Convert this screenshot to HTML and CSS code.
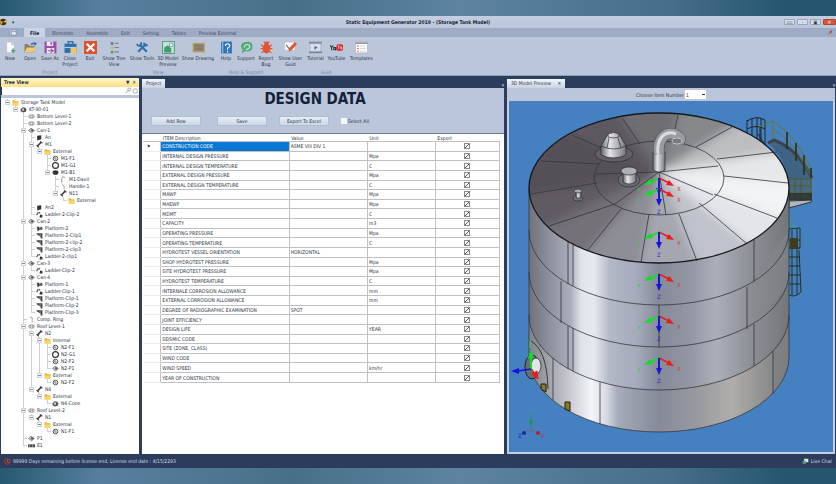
FILE: index.html
```
<!DOCTYPE html>
<html lang="en">
<head>
    <meta charset="UTF-8">
    <meta name="viewport" content="width=device-width, initial-scale=1.0">
    <title>Static Equipment Generator 2019 - (Storage Tank Model)</title>
    <link rel="stylesheet" href="styles.css">
</head>
<body>
    <!-- Shared icon shapes -->
    <svg class="sprite" aria-hidden="true">
        <symbol id="i-folder" viewBox="0 0 12 12"><path d="M1 2h4l1 2h5v7H1z" fill="#e9b93c"/><path d="M2 6h9v5H1z" fill="#f8d564"/></symbol>
        <symbol id="i-model" viewBox="0 0 12 12"><path d="M1 5l4-3 4 1 2 3-1 4-5 1-4-2z" fill="#555"/><path d="M3 5l3-1 1 3-2 2z" fill="#ddd"/></symbol>
        <symbol id="i-level" viewBox="0 0 12 12"><ellipse cx="6" cy="6" rx="5" ry="3" fill="#ddd" stroke="#777"/><path d="M4 3v6M8 3v6" stroke="#888"/></symbol>
        <symbol id="i-can" viewBox="0 0 12 12"><path d="M1 6l4-4 6 4-5 4z" fill="#ccc" stroke="#444"/><circle cx="7" cy="6" r="2" fill="#555"/></symbol>
        <symbol id="i-box" viewBox="0 0 12 12"><path d="M2 3l7-1v7l-7 2z" fill="#333"/></symbol>
        <symbol id="i-nozzle" viewBox="0 0 12 12"><path d="M2 9l7-7" stroke="#444" stroke-width="3"/><path d="M1 7l4 4M7 1l4 3" stroke="#444" stroke-width="2"/></symbol>
        <symbol id="i-flange" viewBox="0 0 12 12"><circle cx="6" cy="6" r="4" fill="#eee" stroke="#444" stroke-width="1.5"/><path d="M5 3v4h3" fill="none" stroke="#333"/></symbol>
        <symbol id="i-ring" viewBox="0 0 12 12"><circle cx="6" cy="6" r="5" fill="#fff" stroke="#333" stroke-width="2"/></symbol>
        <symbol id="i-blind" viewBox="0 0 12 12"><ellipse cx="6" cy="6" rx="5" ry="4" fill="#333"/></symbol>
        <symbol id="i-davit" viewBox="0 0 12 12"><path d="M9 3Q4-1 3 5v6" fill="none" stroke="#555"/></symbol>
        <symbol id="i-handle" viewBox="0 0 12 12"><path d="M3 1q6 4 4 10" fill="none" stroke="#666"/></symbol>
        <symbol id="i-ladder" viewBox="0 0 12 12"><path d="M1 7l3-5M5 4l2-2" stroke="#555" stroke-width="2"/><path d="M7 6l4 1v4H6z" fill="#333"/></symbol>
        <symbol id="i-platform" viewBox="0 0 12 12"><path d="M1 3h5v3h5v2H6l-3 3z" fill="#444"/><circle cx="9" cy="5" r="2" fill="#555"/></symbol>
        <symbol id="i-clip" viewBox="0 0 12 12"><path d="M1 2h10v9H8V8L1 4z" fill="#444"/><path d="M7 3v4" stroke="#ccc"/></symbol>
        <symbol id="i-comp" viewBox="0 0 12 12"><path d="M3 2h4v9" fill="none" stroke="#777"/></symbol>
        <symbol id="i-part" viewBox="0 0 12 12"><path d="M0 4h12v5H0z" fill="#444"/><path d="M3 4v5M8 4v5" stroke="#ddd"/></symbol>
    </svg>

    <div class="app">
        <header class="titlebar">
            <div class="quick">
                <svg class="app-logo" viewBox="0 0 10 10"><circle cx="4" cy="5" r="4" fill="#3a2c18"/><path d="M0 3l4 2-3 4z" fill="#e3a51e"/><path d="M4 5l4-3v4z" fill="#f0c040"/></svg>
                <span>&#9662;</span>
            </div>
            <h1>Static Equipment Generator 2019 - (Storage Tank Model)</h1>
            <div class="window-buttons">
                <button aria-label="Dock">&#9643;&#9643;</button>
                <button aria-label="Minimize">&#8211;</button>
                <button aria-label="Restore">&#9635;</button>
                <button class="close" aria-label="Close">&#10005;</button>
            </div>
        </header>

        <nav class="tabs">
            <button class="menu-button" aria-label="Menu"><svg viewBox="0 0 10 8"><path d="M1 1h7v6H1z" fill="#f4f6fa" stroke="#8794ab"/><path d="M3 1v6M3 3h5" stroke="#8794ab"/></svg></button>
            <a href="#" class="active">File</a>
            <a href="#">Elements</a>
            <a href="#">Assemble</a>
            <a href="#">Edit</a>
            <a href="#">Setting</a>
            <a href="#">Tables</a>
            <a href="#">Preview External</a>
            <svg class="pin" viewBox="0 0 8 8"><path d="M1 7l3-3" stroke="#777"/><path d="M3 3l3-2 1 1-2 4z" fill="#c8433a"/></svg>
        </nav>

        <div class="ribbon">
            <section class="group">
                <div class="tools">
                    <button><svg viewBox="0 0 24 24"><path d="M5 2h9l5 5v14H5z" fill="#fff" stroke="#aab4c4"/><path d="M14 2v5h5" fill="#dde3ec" stroke="#aab4c4"/><path d="M17 14v8M13 18h8" stroke="#4fa870" stroke-width="3"/></svg>New</button>
                    <button><svg viewBox="0 0 24 24"><path d="M1 6h7l2 3h9v12H1z" fill="#8b7b5a"/><path d="M5 12h17l-4 9H1z" fill="#edcb7c"/><path d="M13 7q3-4 8-2" fill="none" stroke="#3c70ab" stroke-width="3"/><path d="M19 1l5 4-5 4z" fill="#3c70ab"/></svg>Open</button>
                    <button><svg viewBox="0 0 24 24"><path d="M1 1h22v22H1z" fill="#9350a6"/><path d="M5 1h12v8H5zM5 13h14v10H5z" fill="#f2e9f5"/><path d="M12 2h3v5h-3z" fill="#9350a6"/><path d="M7 18h9m-4-4l5 4-5 4" fill="none" stroke="#9350a6" stroke-width="2"/></svg>Save As</button>
                    <button><svg viewBox="0 0 24 24"><path d="M8 5V1h8v4" fill="none" stroke="#2e72ad" stroke-width="3"/><path d="M1 5h22v17H1z" fill="#2e72ad"/><path d="M1 12h22" stroke="#b9cde4" stroke-width="2"/><path d="M12 13h11v10H12z" fill="#f0c967"/></svg>Close<br>Project</button>
                    <button><svg viewBox="0 0 24 24"><path d="M0 0h24v24H0z" fill="#dc5230"/><path d="M5 5l14 14M19 5L5 19" stroke="#fff" stroke-width="4"/></svg>Exit</button>
                </div>
                <h2>Project</h2>
            </section>
            <section class="group view">
                <div class="tools">
                    <button><svg viewBox="0 0 24 24"><path d="M5 2h5v5H5z" fill="#4b80b9"/><path d="M5 10h5v5H5z" fill="#e0b450"/><path d="M5 18h5v5H5z" fill="#57a074"/><path d="M12 4h8M12 12h8M12 20h8" stroke="#77818f" stroke-width="2"/></svg>Show Tree<br>View</button>
                    <button><svg viewBox="0 0 24 24"><path d="M6 6l14 14M19 5L4 20" stroke="#2e72ad" stroke-width="4"/><path d="M2 5q0 5 5 4t2-7M15 3q-1 7 7 5" fill="none" stroke="#2e72ad" stroke-width="3"/></svg>Show Tools</button>
                    <button><svg viewBox="0 0 24 24"><path d="M1 1h22v22H1z" fill="#c7e3d5" stroke="#5e9f82" stroke-width="2"/><path d="M4 21v-9l7-4 6 6v7z" fill="#3d9b72"/><path d="M14 4h6v6h-6z" fill="#eef5f8" stroke="#477b9c"/></svg>3D Model<br>Preview</button>
                    <button><svg viewBox="0 0 24 24"><path d="M2 4h21v16H2z" fill="#8b8376" stroke="#c9a55a" stroke-width="2"/><path d="M6 9h12M6 14h12" stroke="#796f62"/></svg>Show Drawing</button>
                </div>
                <h2>View</h2>
            </section>
            <section class="group help">
                <div class="tools">
                    <button><svg viewBox="0 0 24 24"><path d="M2 1h20v22H2z" fill="#2f75b5"/><path d="M5 1v22" stroke="#9cc2e5" stroke-width="2"/><path d="M10 9q0-4 4-4t4 4q0 2-4 4v3M14 18v3" fill="none" stroke="#fff" stroke-width="2"/></svg>Help</button>
                    <button><svg viewBox="0 0 24 24"><path d="M10 2q13-3 13 8t-13 9l-7 4 2-6Q-3 5 10 2z" fill="#55ab7f"/><path d="M8 12q1-7 7-5t1 7l-5 2" fill="none" stroke="#d5eadf" stroke-width="2"/></svg>Support</button>
                    <button><svg viewBox="0 0 24 24"><ellipse cx="12" cy="14" rx="7" ry="9" fill="#e25330"/><circle cx="12" cy="5" r="4" fill="#e25330"/><path d="M2 7l5 4M22 7l-5 4M1 14h22M3 22l5-4M21 22l-5-4M7 1l3 3M17 1l-3 3" stroke="#e25330" stroke-width="2"/></svg>Report<br>Bug</button>
                </div>
                <h2>Help &amp; Support</h2>
            </section>
            <section class="group guide">
                <div class="tools">
                    <button><svg viewBox="0 0 24 24"><path d="M1 2h19v15H1z" fill="#f6f7f9" stroke="#b9bfca"/><path d="M4 7l6 8 5-6" fill="none" stroke="#666" stroke-width="2"/><path d="M8 20l2-7L20 2l4 4-10 11z" fill="#dd5b36"/></svg>Show User<br>Guid</button>
                    <button><svg viewBox="0 0 24 24"><path d="M0 3h24M0 21h24" stroke="#7a8699" stroke-width="3"/><path d="M2 5h20v14H2z" fill="#d9e1ec" stroke="#8f9bae"/><path d="M10 9l6 3-6 4z" fill="#3c669a"/></svg>Tutorial</button>
                    <button><svg viewBox="0 0 24 24"><path d="M0 8l3 4v5M6 8l-3 4M7 12h3v4H7zM11 11v5" fill="none" stroke="#333" stroke-width="2"/><rect x="12" y="6" width="12" height="12" rx="3" fill="#d9232e"/><path d="M14 9h4M16 9v6M20 9v6h2v-3h-2" fill="none" stroke="#fff"/></svg>YouTube</button>
                    <button><svg viewBox="0 0 24 24"><path d="M1 2h22v20H1z" fill="#fff" stroke="#99a3b3"/><path d="M1 4h22" stroke="#8c94a2" stroke-width="3"/><path d="M4 9h3M4 14h3M4 19h3" stroke="#d8633f" stroke-width="2"/><path d="M9 9h11M9 14h11M9 19h11" stroke="#a9b3c2"/></svg>Templates</button>
                </div>
                <h2>Guid</h2>
            </section>
        </div>

        <main class="workspace">
            <aside class="tree-panel">
                <div class="tree-head"><b>Tree View</b><span>&#9660;&nbsp; &#10005;</span></div>
                <div class="tree-search">
                    <input type="text" aria-label="Search tree">
                    <svg viewBox="0 0 24 10"><path d="M6 8l4-4" stroke="#888"/><circle cx="11" cy="3" r="2" fill="none" stroke="#888"/><circle cx="19" cy="5" r="3" fill="none" stroke="#999"/></svg>
                </div>
                <ul id="tree" class="tree"></ul>
            </aside>

            <section class="project">
                <div class="doc-tabs"><a href="#" class="doc-tab">Project</a><span>&#9662;</span></div>
                <div class="project-head">
                    <h2>DESIGN DATA</h2>
                    <div class="actions">
                        <button>Add Row</button>
                        <button>Save</button>
                        <button>Export To Excel</button>
                        <label><input type="checkbox" id="select-all">Select All</label>
                    </div>
                </div>
                <div class="grid-wrap">
                    <table class="data">
                        <colgroup><col class="c-mark"><col class="c-item"><col class="c-value"><col class="c-unit"><col class="c-export"></colgroup>
                        <thead><tr><th></th><th>ITEM Description</th><th>Value</th><th>Unit</th><th>Export</th></tr></thead>
                        <tbody id="rows"></tbody>
                    </table>
                </div>
            </section>

            <section class="preview">
                <div class="doc-tabs"><a href="#" class="doc-tab">3D Model Preview <b>&#10005;</b></a><span>&#9662;</span></div>
                <div class="preview-bar">
                    <label for="item-number">Choose Item Number</label>
                    <select id="item-number"><option>1</option><option>2</option></select>
                </div>
                <div class="viewport">
                    <svg viewBox="509 101 324 352" preserveAspectRatio="xMidYMin slice" role="img" aria-label="Storage tank model">
                        <defs>
                            <linearGradient id="shell" gradientUnits="userSpaceOnUse" x1="529" y1="0" x2="789" y2="0">
                                <stop offset="0" stop-color="#6f7278"/>
                                <stop offset=".07" stop-color="#8b8e99"/>
                                <stop offset=".16" stop-color="#a9aebb"/>
                                <stop offset=".2" stop-color="#dfe3ea"/>
                                <stop offset=".25" stop-color="#e6e9ef"/>
                                <stop offset=".31" stop-color="#b3b9c8"/>
                                <stop offset=".42" stop-color="#a3a9b9"/>
                                <stop offset=".5" stop-color="#858a99"/>
                                <stop offset=".62" stop-color="#9397a3"/>
                                <stop offset=".72" stop-color="#abafb9"/>
                                <stop offset=".84" stop-color="#8f9298"/>
                                <stop offset="1" stop-color="#72757a"/>
                            </linearGradient>
                            <linearGradient id="base" gradientUnits="userSpaceOnUse" x1="529" y1="0" x2="789" y2="0">
                                <stop offset="0" stop-color="#808288"/>
                                <stop offset=".12" stop-color="#b5b8c0"/>
                                <stop offset=".24" stop-color="#f4f5f8"/>
                                <stop offset=".3" stop-color="#d5d9e2"/>
                                <stop offset=".34" stop-color="#a7acba"/>
                                <stop offset=".5" stop-color="#858a98"/>
                                <stop offset=".66" stop-color="#9b9ca0"/>
                                <stop offset=".78" stop-color="#b0adab"/>
                                <stop offset="1" stop-color="#77797c"/>
                            </linearGradient>
                            <linearGradient id="pipe" x1="0" x2="1">
                                <stop offset="0" stop-color="#66676b"/><stop offset=".35" stop-color="#e4e6ea"/><stop offset="1" stop-color="#77787d"/>
                            </linearGradient>
                            <filter id="soft"><feGaussianBlur stdDeviation="5"/></filter>
                            <clipPath id="roof"><ellipse cx="659" cy="188" rx="130" ry="75"/></clipPath>
                            <clipPath id="body"><path d="M529 188A130 75 0 0 0 789 188V357A130 75 0 0 1 529 357z"/></clipPath>
                            <g id="axes">
                                <path d="M0 0l-10 5" stroke="#13dc27" stroke-width="1.5"/><path d="M-15 7l6-6 3 5z" fill="#13dc27"/>
                                <path d="M0 0l10 5" stroke="#ea1c1c" stroke-width="1.5"/><path d="M15 8l-8-1 3-5z" fill="#ea1c1c"/>
                                <path d="M0 0v10" stroke="#1414dc" stroke-width="2"/><path d="M0 17l-3-7h6z" fill="#1414dc"/>
                                <text x="-22" y="14" fill="#35c24a">Y</text><text x="18" y="13" fill="#d8343a">X</text><text x="-2" y="25" fill="#2525cf">Z</text>
                            </g>
                        </defs>

                        <!-- platform and ladder -->
                        <path d="M768 143l6-3q22 8 38 38l-2 6h-22q-2-26-20-41z" fill="#3f6385"/>
                        <path d="M768 143l6-3q24 9 38 38" fill="none" stroke="#3c434c" stroke-width="3"/>
                        <path d="M747 120v19M752 118v25M757 117v28M761 118v28M765 120v26M747 121q9-6 18-1M747 129q9-5 18 0M760 127v17M758 134l8 12" fill="none" stroke="#20262a"/>
                        <path d="M773 121v19M787 132v17M796 143v18M804 155v20M811 168v25M759 127l14-6 14 11 9 11 8 12 7 13M773 129l14 11 9 10 8 13 7 13" fill="none" stroke="#68752f"/>
                        <path d="M787 132v17M796 143v18M804 155v20M811 168v10" stroke="#23281a" stroke-width="1.5"/>
                        <path d="M789 179h22v21h-22z" fill="#4a6a80"/>
                        <path d="M789 179h22v21h-22zM789 186h22M789 193h22M795 179v20M801 179v20" fill="none" stroke="#4f5b2c"/>
                        <path d="M789 193h23v7h-23z" fill="#23281f" opacity=".7"/>
                        <path d="M789 201l23-1-1 2-22 6z" fill="#b0b4bb" stroke="#333"/>
                        <path d="M789 229l11-1v20h-11M792 230v65M797 229v65M799 250l2 42q-6 6-12 3M789 240h11M789 248h11M789 257h11M789 266h11M789 275h12M789 284h12" fill="none" stroke="#26311f"/>
                        <path d="M790 238h8v11h-8z" fill="#413c20"/><path d="M789 218v10M789 222l7 6" fill="none" stroke="#35b142"/>

                        <!-- shell -->
                        <path d="M529 188A130 75 0 0 0 789 188V357A130 75 0 0 1 529 357z" fill="url(#shell)"/>
                        <g clip-path="url(#body)">
                            <path d="M529 315A130 75 0 0 0 789 315V440H529z" fill="url(#base)"/>
                            <path d="M747 287L789 230V285L747 330z" fill="#85888b" opacity=".5"/>
                            <path d="M773 351V440H800V320z" fill="#7d8083" opacity=".6"/>
                        </g>
                        <g class="seam">
                            <path d="M529 230A130 75 0 0 0 789 230M529 272A130 75 0 0 0 789 272M529 315A130 75 0 0 0 789 315"/>
                            <path d="M568 242v42M573 244v42M754 239v42M561 281v42M659 305v42M747 287v42M568 326v43M573 328v43M754 324v42M553 358v42M600 382v42M773 351v43"/>
                            <path d="M529 188V357A130 75 0 0 0 789 357V188"/>
                        </g>

                        <!-- roof plates -->
                        <g clip-path="url(#roof)">
                            <ellipse cx="659" cy="188" rx="130" ry="75" fill="#8d8e95"/>
                            <g filter="url(#soft)">
                                <path d="M659 172L537 120L606 95z" fill="#5d5960"/>
                                <path d="M659 172L606 95L686 92z" fill="#6e6e73"/>
                                <path d="M659 172L686 92L761 109z" fill="#85878b"/>
                                <path d="M659 172L761 109L824 144z" fill="#bcbec1"/>
                                <path d="M659 172L824 144L838 187z" fill="#e5e7e9"/>
                                <path d="M659 172L838 187L824 234z" fill="#f2f4f5"/>
                                <path d="M659 172L824 234L781 271z" fill="#e2e5e9"/>
                                <path d="M659 172L781 271L712 297z" fill="#c0c3cb"/>
                                <path d="M659 172L712 297L634 298z" fill="#a5a7b0"/>
                                <path d="M659 172L634 298L558 283z" fill="#8e8e97"/>
                                <path d="M659 172L558 283L505 246z" fill="#746f78"/>
                                <path d="M659 172L505 246L480 203z" fill="#605a63"/>
                                <path d="M659 172L480 203L494 157z" fill="#554f57"/>
                                <path d="M659 172L494 157L537 120z" fill="#544f56"/>
                            </g>
                        </g>
                        <g class="seam">
                            <ellipse cx="659" cy="178" rx="65" ry="37"/>
                            <path d="M622 118l18 26M678 115l-6 27M732 127l-36 20M777 152l-60 7M788 183l-64-7M777 218l-63-24M746 243l-47-40M697 261l-18-47M641 262l8-48M587 251l34-42M549 226l66-22M531 194l66-11M541 161l59 3M572 135l39 17"/>
                            <path d="M596 174l63-2 59-6M659 172l-44 32M659 172l54 23M659 172l7 43"/>
                        </g>
                        <ellipse class="rim" cx="659" cy="188" rx="130" ry="75"/>

                        <!-- roof nozzles -->
                        <g stroke="#2c2c30" stroke-width=".7">
                            <ellipse cx="614" cy="154" rx="19" ry="8" fill="#625f66"/>
                            <path d="M601 146v9q12 6 25 0v-9z" fill="url(#pipe)"/>
                            <path d="M601 146l7-12q6-3 11 0l7 12q-12 6-25 0z" fill="url(#pipe)"/>
                            <path d="M608 134v3q6 2 11 0v-3M609 138l-2 10M618 138l3 10" fill="none"/>
                            <ellipse cx="629" cy="180" rx="11" ry="7" fill="#6d6b72"/>
                            <path d="M623 171v11q6 4 13 0v-11z" fill="url(#pipe)"/>
                            <ellipse cx="629" cy="171" rx="8" ry="4" fill="#aeb0b5"/>
                            <ellipse cx="578" cy="198" rx="5" ry="3" fill="#77747b"/>
                            <path d="M576 192v6h5v-6z" fill="url(#pipe)"/><ellipse cx="578" cy="191" rx="4" ry="2" fill="#aaa"/>
                            <path d="M653 152v18q6 4 12 0v-18z" fill="url(#pipe)"/>
                        </g>
                        <path d="M659 154C657 137 668 129 678 136q4 3 1 5" fill="none" stroke="#505156" stroke-width="11"/>
                        <path d="M659 154C657 137 668 129 678 136q4 3 1 5" fill="none" stroke="#9a9ca2" stroke-width="10"/>
                        <path d="M658 154C656 137 666 130 676 134" fill="none" stroke="#d9dbde" stroke-width="3"/>
                        <ellipse cx="677" cy="141" rx="5" ry="3" fill="#77797e" stroke="#c5c6c9"/>

                        <!-- shell manway -->
                        <path d="M531 341q16 9 17 48" fill="none" stroke="#33363a"/>
                        <ellipse cx="532" cy="367" rx="7" ry="12" fill="#6b6e73" stroke="#202224"/>
                        <ellipse cx="536" cy="366" rx="5" ry="8" fill="#e2e4e7" stroke="#444"/>
                        <path d="M531 369V353" stroke="#13dc27" stroke-width="2"/><path d="M531 349l-3 9h6z" fill="#13dc27"/>
                        <path d="M531 369l-13 2" stroke="#1414dc" stroke-width="1.5"/><path d="M511 371l8-3v6z" fill="#1414dc"/>
                        <path d="M532 369l3 5M532 374l5-3 1 8z" fill="#ea1c1c" stroke="#ea1c1c"/>
                        <path d="M541 384h5v8l-5-3zM565 402h5v9l-5-2z" fill="#8a7a22" stroke="#1f1d12"/>
                        <path d="M530 348v-8" stroke="#35d142"/>

                        <use href="#axes" x="659" y="178"/>
                        <use href="#axes" x="659" y="189"/>
                        <use href="#axes" x="659" y="232"/>
                        <use href="#axes" x="659" y="274"/>
                        <use href="#axes" x="659" y="316"/>
                        <use href="#axes" x="659" y="358"/>

                        <!-- view cube axes -->
                        <path d="M523 433l8-3 7 3M531 430v-8" fill="none" stroke="#5c6d84"/>
                        <circle cx="531" cy="422" r="2" fill="#129a3a"/><circle cx="524" cy="433" r="2" fill="#1c2aa8"/><circle cx="538" cy="433" r="2" fill="#b2203a"/>
                        <text x="529" y="419" fill="#129a3a">Y</text><text x="518" y="438" fill="#1c2aa8">Z</text><text x="541" y="438" fill="#c8304a">X</text>
                    </svg>
                </div>
            </section>
        </main>

        <footer class="statusbar">
            <svg viewBox="0 0 10 10"><circle cx="5" cy="5" r="4" fill="#4a2e40" stroke="#c4543f"/><path d="M5 3v3h2" fill="none" stroke="#e0765f"/></svg>
            <span>99999 Days remaining before license end, License end date : 4/15/2293</span>
            <a href="#"><svg viewBox="0 0 10 10"><path d="M3 1h6v5H6L3 8z" fill="#dce9e4"/><path d="M1 4h5v4H3L1 9z" fill="#5aa68a"/></svg>Live Chat</a>
        </footer>
    </div>

    <script>
        // [name, icon, children]
        const model = [['Storage Tank Model', 'folder', [
            ['KT-90-01', 'model', [
                ['Bottom Level-1', 'level'],
                ['Bottom Level-2', 'level'],
                ['Can-1', 'can', [
                    ['An', 'box'],
                    ['M1', 'nozzle', [
                        ['External', 'folder', [
                            ['M1-F1', 'flange'],
                            ['M1-G1', 'ring'],
                            ['M1-B1', 'blind', [
                                ['M1-Davit', 'davit'],
                                ['Handle-1', 'handle'],
                                ['N11', 'nozzle', [['External', 'folder']]]
                            ]]
                        ]]
                    ]],
                    ['An2', 'box'],
                    ['Ladder-2-Clip-2', 'ladder']
                ]],
                ['Can-2', 'can', [
                    ['Platform-2', 'platform'],
                    ['Platform-2-Clip1', 'clip'],
                    ['Platform-2-clip-2', 'clip'],
                    ['Platform-2-clip3', 'clip'],
                    ['Ladder-2-clip1', 'ladder']
                ]],
                ['Can-3', 'can', [['Ladder-Clip-2', 'ladder']]],
                ['Can-4', 'can', [
                    ['Platform-1', 'platform'],
                    ['Ladder-Clip-1', 'ladder'],
                    ['Platform-Clip-1', 'clip'],
                    ['Platform-Clip-2', 'clip'],
                    ['Platform-Clip-3', 'clip']
                ]],
                ['Comp. Ring', 'comp'],
                ['Roof Level-1', 'level', [
                    ['N2', 'nozzle', [
                        ['Internal', 'folder', [
                            ['N2-F1', 'flange'],
                            ['N2-G1', 'ring'],
                            ['N2-F2', 'flange'],
                            ['N2-P1', 'can']
                        ]],
                        ['External', 'folder', [['N2-F2', 'flange']]]
                    ]],
                    ['N4', 'nozzle', [['External', 'folder', [['N4-Cone', 'model']]]]]
                ]],
                ['Roof Level-2', 'level', [
                    ['N1', 'nozzle', [['External', 'folder', [['N1-F1', 'flange']]]]]
                ]],
                ['P1', 'can'],
                ['E1', 'part']
            ]]
        ]]];

        // [description, value, unit]
        const items = [
            ['CONSTRUCTION CODE', 'ASME VIII DIV 1', ''],
            ['INTERNAL DESIGN PRESSURE', '', 'Mpa'],
            ['INTERNAL DESIGN TEMPERATURE', '', 'C'],
            ['EXTERNAL DESIGN PRESSURE', '', 'Mpa'],
            ['EXTERNAL DESIGN TEMPERATURE', '', 'C'],
            ['MAWP', '', 'Mpa'],
            ['MAEWP', '', 'Mpa'],
            ['MDMT', '', 'C'],
            ['CAPACITY', '', 'm3'],
            ['OPERATING PRESSURE', '', 'Mpa'],
            ['OPERATING TEMPERATURE', '', 'C'],
            ['HYDROTEST VESSEL ORIENTATION', 'HORIZONTAL', ''],
            ['SHOP HYDROTEST PRESSURE', '', 'Mpa'],
            ['SITE HYDROTEST PRESSURE', '', 'Mpa'],
            ['HYDROTEST TEMPERATURE', '', 'C'],
            ['INTERNALE CORROSION ALLOWANCE', '', 'mm'],
            ['EXTERNAL CORROSION ALLOWANCE', '', 'mm'],
            ['DEGREE OF RADIOGRAPHIC EXAMINATION', 'SPOT', ''],
            ['JOINT EFFICIENCY', '', ''],
            ['DESIGN LIFE', '', 'YEAR'],
            ['SEISMIC CODE', '', ''],
            ['SITE (ZONE, CLASS)', '', ''],
            ['WIND CODE', '', ''],
            ['WIND SPEED', '', 'km/hr'],
            ['YEAR OF CONSTRUCTION', '', '']
        ];

        function renderTree(nodes, list) {
            nodes.forEach(([name, icon, children]) => {
                const li = document.createElement('li');
                const toggle = children ? `<button aria-label="Toggle ${name}"></button>` : '<i></i>';
                li.innerHTML = `<div class="node">${toggle}<svg><use href="#i-${icon}"/></svg><span>${name}</span></div>`;
                if (children) {
                    const ul = document.createElement('ul');
                    renderTree(children, ul);
                    li.appendChild(ul);
                    li.querySelector('button').onclick = () => { ul.hidden = !ul.hidden; };
                }
                list.appendChild(li);
            });
        }

        function renderRows() {
            document.getElementById('rows').innerHTML = items.map(([name, value, unit], i) => `
                <tr class="${i === 0 ? 'selected' : ''}">
                    <td>${i === 0 ? '&#9654;' : ''}</td><td>${name}</td><td>${value}</td><td>${unit}</td>
                    <td><input type="checkbox" aria-label="Export ${name}" checked></td>
                </tr>`).join('');
        }

        document.getElementById('select-all').onchange = function() {
            document.querySelectorAll('#rows input').forEach(box => { box.checked = this.checked; });
        };

        renderTree(model, document.getElementById('tree'));
        renderRows();
    </script>
</body>
</html>
```
FILE: styles.css
```
* {
    margin: 0;
    padding: 0;
    box-sizing: border-box;
}
body {
    min-height: 100vh;
    padding: 16px 0;
    display: flex;
    flex-direction: column;
    font-family: "DejaVu Sans Condensed", "DejaVu Sans", Tahoma, sans-serif;
    font-size: 5px;
    line-height: 6px;
    color: #2c3444;
    background: linear-gradient(90deg, #265a70, #567f9e 12%, #477088 35%, #5d83a0 55%, #466f8a 80%, #25566e 94%);
}
button, input, select {
    font: inherit;
    color: inherit;
    border: none;
    background: none;
}
a {
    color: inherit;
    text-decoration: none;
}
ul {
    list-style: none;
}
.sprite {
    display: none;
}
.app {
    flex: 1;
    display: flex;
    flex-direction: column;
    background-color: #2b3c5c;
}
.titlebar {
    height: 12px;
    display: grid;
    grid-template-columns: 1fr auto 1fr;
    align-items: center;
    background: linear-gradient(#c3cee1, #b9c5da);
}
.titlebar h1 {
    font-size: 5px;
    color: #1c2333;
}
.quick {
    display: flex;
    align-items: center;
    gap: 4px;
}
.app-logo {
    width: 8px;
    height: 8px;
}
.window-buttons {
    display: flex;
    justify-content: flex-end;
    gap: 2px;
}
.window-buttons button {
    width: 11px;
    height: 6px;
    line-height: 5px;
    border: 1px solid #98a5ba;
    border-radius: 1px;
    background-color: #d5deea;
}
.window-buttons .close {
    width: 13px;
    border-color: #b0452f;
    background-color: #d4563c;
    color: white;
}
.tabs {
    height: 9px;
    padding: 0 3px;
    display: flex;
    align-items: stretch;
    gap: 1px;
    background-color: #9dabc5;
}
.tabs a {
    padding: 0 6px;
    line-height: 10px;
    color: #3e4a62;
}
.tabs .active {
    background-color: #c8d4e6;
    color: #121a2b;
    font-weight: bold;
}
.menu-button {
    width: 20px;
}
.menu-button svg {
    width: 9px;
    height: 7px;
}
.pin {
    width: 6px;
    margin-left: auto;
}
.ribbon {
    height: 39px;
    padding-top: 4px;
    display: flex;
    background-color: #bbc6da;
    border-bottom: 1px solid #90a0bb;
}
.group {
    display: flex;
    flex-direction: column;
    justify-content: space-between;
}
.group h2 {
    font-size: 5px;
    font-weight: normal;
    text-align: center;
    color: #76849e;
}
.tools {
    display: flex;
    align-items: flex-start;
}
.tools button {
    width: 20px;
    display: flow-root;
    text-align: center;
    white-space: nowrap;
}
.tools svg {
    display: block;
    width: 13px;
    height: 13px;
    margin: 0 auto 1px;
}
.view .tools button {
    width: 28px;
}
.view .tools button:nth-child(3) {
    width: 24px;
}
.view .tools button:last-child {
    width: 36px;
}
.guide .tools button {
    width: 21px;
}
.guide .tools button:first-child, .guide .tools button:last-child {
    width: 29px;
}
.workspace {
    flex: 1;
    padding: 2px 1px 0;
    display: grid;
    grid-template-columns: 138fr 362fr 328fr;
    gap: 3px;
}
.tree-panel {
    background-color: white;
}
.tree-head {
    height: 9px;
    padding: 0 3px;
    display: flex;
    justify-content: space-between;
    line-height: 9px;
    background: linear-gradient(#fff5cf, #ffe182);
}
.tree-search {
    height: 11px;
    display: flex;
    border: 1px solid #c5cddb;
    border-width: 0 0 3px;
    border-color: #bbc6da;
}
.tree-search input {
    flex: 1;
    min-width: 0;
    padding-left: 1px;
    border-left: 1px solid #333;
}
.tree-search svg {
    width: 18px;
    height: 8px;
}
.tree {
    padding: 1px 0 0 3px;
}
.tree ul {
    padding-left: 8px;
}
.tree li {
    background: linear-gradient(#d0d0d0, #d0d0d0) 3px 0 / 1px 100% no-repeat;
}
.tree li:last-child {
    background-size: 1px 4px;
}
.node {
    height: 7px;
    display: flex;
    align-items: center;
    gap: 1px;
    line-height: 7px;
    white-space: nowrap;
}
.node button {
    width: 5px;
    height: 5px;
    margin: 0 1px;
    border: 1px solid #cdd2da;
    background: linear-gradient(#889, #889) center / 3px 1px no-repeat white;
}
.node i {
    width: 4px;
    height: 1px;
    margin-left: 3px;
    background-color: #d0d0d0;
}
.node svg {
    width: 7px;
    height: 7px;
}
.node span {
    margin-left: 1px;
}
.project, .preview {
    display: flex;
    flex-direction: column;
}
.doc-tabs {
    height: 10px;
    display: flex;
    justify-content: space-between;
    align-items: flex-end;
    color: #b9c4d8;
}
.doc-tab {
    height: 9px;
    padding: 0 4px;
    line-height: 9px;
    color: #2c3444;
    background: linear-gradient(#f4f7fb, #c7d2e4);
}
.doc-tab b {
    margin-left: 5px;
}
.project-head {
    height: 46px;
    padding: 3px 9px 0;
    background-color: #bbc6da;
    border-bottom: 1px solid #6f7c94;
}
.project-head h2 {
    padding-right: 16px;
    font-size: 15px;
    line-height: 16px;
    text-align: center;
    color: #14213a;
}
.actions {
    margin-top: 9px;
    display: flex;
    align-items: center;
    gap: 12px;
}
.actions button {
    width: 50px;
    height: 10px;
    background: linear-gradient(#e6edf6, #ccd7e6);
    border: 1px solid #b0bdd2;
}
.actions button:first-child {
    margin-right: 4px;
}
.actions label {
    display: flex;
    align-items: center;
    gap: 1px;
}
input[type="checkbox"] {
    appearance: none;
    width: 6px;
    height: 6px;
    background-color: #f3f6fa;
}
.grid-wrap {
    flex: 1;
    padding: 1px 4px 0 1px;
    background-color: white;
}
.data {
    width: 100%;
    height: 248px;
    table-layout: fixed;
    border-collapse: collapse;
}
.c-mark {
    width: 5%;
}
.c-item {
    width: 36%;
}
.c-value {
    width: 22%;
}
.c-unit {
    width: 19%;
}
.c-export {
    width: 18%;
}
.data th {
    padding: 0 2px;
    font-weight: normal;
    text-align: left;
    border-bottom: 1px solid #c0c0c0;
}
.data td {
    padding: 0 1px;
    border: 1px solid #c0c0c0;
    white-space: nowrap;
}
.data td:first-child {
    border-color: #ececec;
    border-left: none;
    border-right-color: #c0c0c0;
    padding-right: 6px;
    text-align: center;
    font-size: 4px;
}
.data td:last-child {
    text-align: center;
}
.data .selected td:nth-child(2) {
    background-color: #0a78d4;
    color: white;
}
.data input[type="checkbox"] {
    display: block;
    margin: 0 auto;
    border: 1px solid #8a8a8a;
    background-color: white;
}
.data input[type="checkbox"]:checked {
    background: linear-gradient(135deg, transparent 40%, #555 40%, #555 60%, transparent 60%) center / 4px 4px no-repeat white;
}
.preview-bar {
    height: 13px;
    display: flex;
    justify-content: center;
    align-items: center;
    gap: 1px;
    background-color: #bbc6da;
}
.preview-bar select {
    width: 21px;
    height: 9px;
    padding-left: 1px;
    appearance: none;
    background: linear-gradient(#333, #333) 17px 4px / 3px 1px no-repeat white;
}
.viewport {
    flex: 1;
    display: grid;
    background-color: #4580c0;
    border: 2px solid #c3cee1;
    border-top: none;
}
.viewport svg {
    width: 100%;
    height: 0;
    min-height: 100%;
    font-size: 6px;
}
.seam {
    fill: none;
    stroke: #34363b;
    stroke-width: .8;
}
.rim {
    fill: none;
    stroke: #15181c;
    stroke-width: 1.3;
}
.statusbar {
    height: 14px;
    padding: 0 4px;
    display: flex;
    align-items: center;
    gap: 2px;
    color: #d5dcea;
}
.statusbar svg {
    width: 7px;
    height: 7px;
}
.statusbar a {
    margin-left: auto;
    display: flex;
    align-items: center;
    gap: 2px;
}
```
